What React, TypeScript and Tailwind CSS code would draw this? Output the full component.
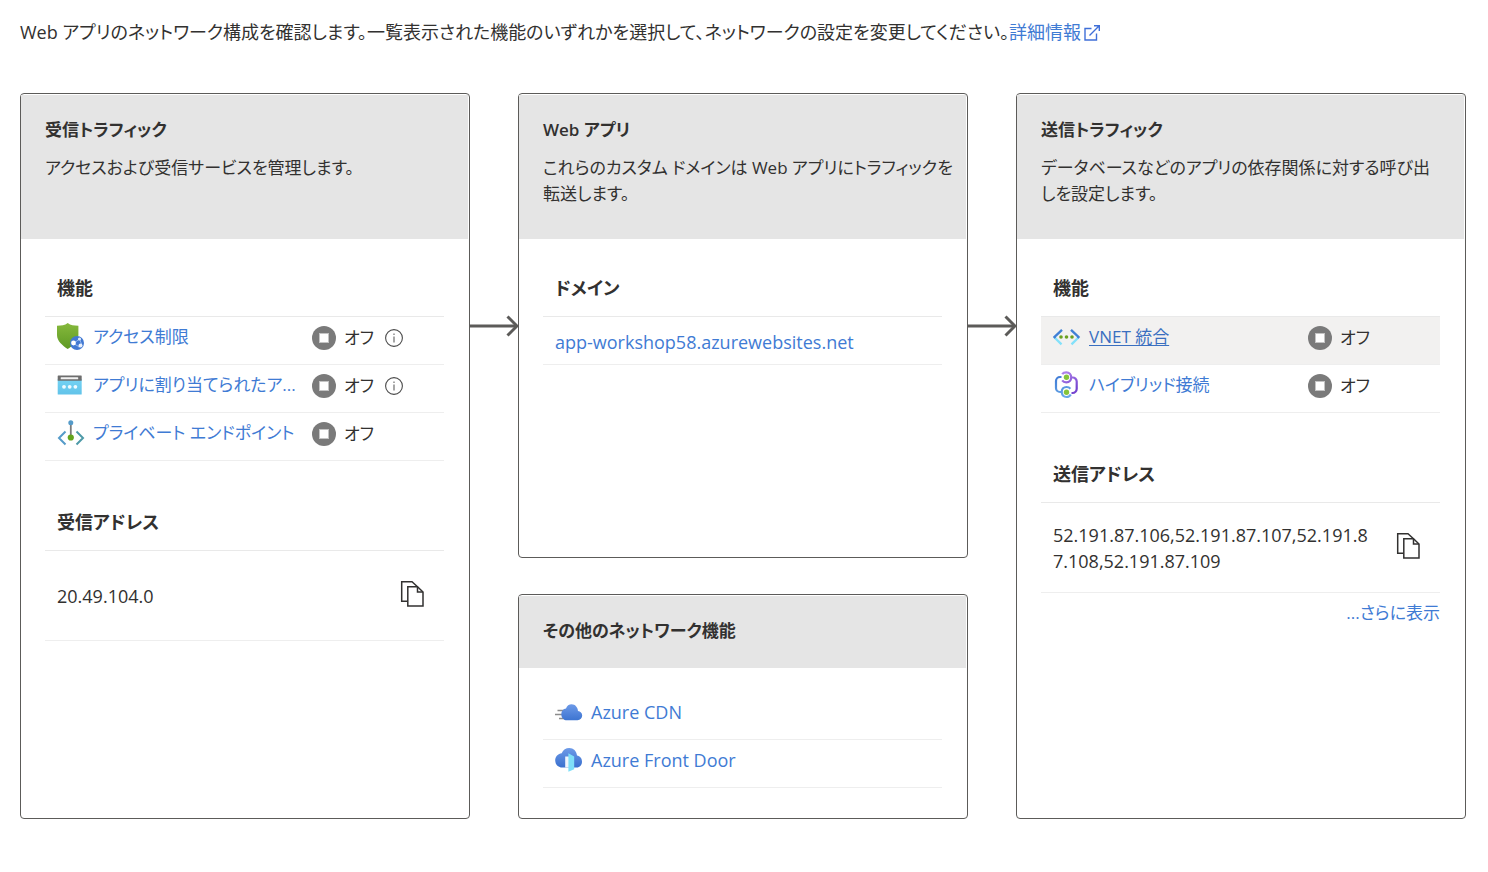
import type { ReactNode } from "react";

const LINK = "text-[#3f7bd4] hover:underline";

function ShieldIcon() {
  return (
    <svg width="28" height="28" viewBox="0 0 28 28" aria-hidden="true">
      <defs>
        <linearGradient id="shield" x1="0" y1="0" x2="0" y2="1">
          <stop offset="0" stopColor="#86b93c" />
          <stop offset="1" stopColor="#5f9a24" />
        </linearGradient>
      </defs>
      <path d="M10.700 0c3 2.400 6.200 2.600 10.700 2.700v9.300c0 6-5.500 10.500-10.700 14C5.500 22.500 0 18 0 12V2.700C4.500 2.600 7.700 2.400 10.700 0z" fill="url(#shield)" />
      <circle cx="20" cy="20" r="7" fill="#4178d2" />
      <path d="M16.500 20.500l6-4.500M16.500 20.500l6 3.500M22.500 16l2 5-2.500 3.500" stroke="#8fb4ee" strokeWidth="1" fill="none" />
      <circle cx="16.500" cy="20" r="2.400" fill="#fff" />
      <circle cx="22.500" cy="16" r="1.600" fill="#dce9fb" />
      <circle cx="23.500" cy="22.500" r="2" fill="#e8f0fc" />
    </svg>
  );
}

function WindowIcon() {
  return (
    <svg width="28" height="20" viewBox="0 0 28 20" aria-hidden="true">
      <defs>
        <linearGradient id="window" x1="0" y1="0" x2="0" y2="1">
          <stop offset="0" stopColor="#74d3f4" />
          <stop offset="1" stopColor="#62c3e9" />
        </linearGradient>
      </defs>
      <rect x="0.700" y="4" width="24" height="15.500" rx="0.600" fill="url(#window)" />
      <rect x="0.700" y="0.500" width="24" height="5.300" rx="0.600" fill="#6d6d6d" />
      <rect x="3.700" y="2.200" width="17.500" height="2" rx="0.500" fill="#f2f2f2" />
      <circle cx="7" cy="11.800" r="1.900" fill="#eefaff" />
      <circle cx="12.700" cy="11.800" r="1.900" fill="#eefaff" />
      <circle cx="18.400" cy="11.800" r="1.900" fill="#eefaff" />
    </svg>
  );
}

function EndpointIcon() {
  return (
    <svg width="28" height="26" viewBox="0 0 28 26" fill="none" aria-hidden="true">
      <path d="M8.500 11.500L2 18l6.500 6.500" stroke="#559bc9" strokeWidth="2" />
      <path d="M19.500 11.500L26 18l-6.500 6.500" stroke="#4e9aa8" strokeWidth="2" />
      <path d="M13.800 3v14" stroke="#7b7b7b" strokeWidth="1.800" />
      <circle cx="13.800" cy="2.700" r="2.500" fill="#559bc9" />
      <circle cx="13.800" cy="17.500" r="3.100" fill="#64a41c" />
    </svg>
  );
}

function VnetIcon() {
  return (
    <svg width="28" height="18" viewBox="0 0 28 18" fill="none" aria-hidden="true">
      <path d="M1.500 9.500l7 6.800" stroke="#83e1fa" strokeWidth="2.400" />
      <path d="M25.500 9.500l-7 6.800" stroke="#83e1fa" strokeWidth="2.400" />
      <path d="M9 1.800L1.500 9l1 1" stroke="#3f80d6" strokeWidth="2.400" />
      <path d="M18 1.800L25.500 9l-1 1" stroke="#3f80d6" strokeWidth="2.400" />
      <circle cx="8" cy="9" r="1.800" fill="#6aa121" />
      <circle cx="13.500" cy="9" r="1.800" fill="#6aa121" />
      <circle cx="19" cy="9" r="1.800" fill="#6aa121" />
    </svg>
  );
}

function HybridIcon() {
  return (
    <svg width="28" height="28" viewBox="0 0 28 28" fill="none" aria-hidden="true">
      <defs>
        <linearGradient id="hybridBlue" x1="0" y1="0" x2="0.400" y2="1">
          <stop offset="0" stopColor="#3f7bd6" />
          <stop offset="1" stopColor="#67a7e6" />
        </linearGradient>
        <linearGradient id="hybridPurple" x1="0" y1="0" x2="0.400" y2="1">
          <stop offset="0" stopColor="#b184ea" />
          <stop offset="1" stopColor="#7443cf" />
        </linearGradient>
      </defs>
      <path d="M8.500 6H7a4 4 0 0 0-4 4v7a4 4 0 0 0 4 4h1.700c.3 3 2 5 4.800 5 2 0 3.500-1 4.300-2.500M8.700 21c0-3 2-5 4.800-5 1.700 0 3 .6 3.900 1.700" stroke="url(#hybridBlue)" strokeWidth="2.200" />
      <path d="M18.500 22H19.500a4.200 4.200 0 0 0 4.200-4.200V10.500A4 4 0 0 0 19.500 6.500H18.500M9.200 3.200C10 2 11.500 1.300 13.300 1.300c2.900 0 4.900 2.100 4.900 5s-2 5-4.900 5c-1.800 0-3.300-.8-4.100-2" stroke="url(#hybridPurple)" strokeWidth="2.200" />
      <circle cx="13.500" cy="6.300" r="2.700" fill="#86c43a" />
      <circle cx="13.500" cy="21.200" r="2.700" fill="#86c43a" />
    </svg>
  );
}

function CdnIcon() {
  return (
    <svg width="28" height="18" viewBox="0 0 28 18" aria-hidden="true">
      <defs>
        <linearGradient id="cdn" x1="0" y1="0" x2="0" y2="1">
          <stop offset="0" stopColor="#6d9ae8" />
          <stop offset="1" stopColor="#3d74d1" />
        </linearGradient>
      </defs>
      <path d="M2.500 6.500H10M0 10.500H10M4 14.500H12" stroke="#8c8c8c" strokeWidth="1.500" />
      <path d="M23 7C22.700 3.200 20 .3 16.700.3c-2.600 0-4.900 1.500-5.700 4.200C8.300 4.900 6.300 7 6.300 10.200c0 3.500 2.500 6.100 5.600 6.100h10.600c2.700 0 4.700-2 4.700-4.700 0-2.500-1.800-4.300-4.200-4.600z" fill="url(#cdn)" />
    </svg>
  );
}

function FrontDoorIcon() {
  return (
    <svg width="28" height="26" viewBox="0 0 28 26" aria-hidden="true">
      <defs>
        <linearGradient id="door" x1="0" y1="0" x2="0" y2="1">
          <stop offset="0" stopColor="#6d9ae8" />
          <stop offset="1" stopColor="#3a70ce" />
        </linearGradient>
      </defs>
      <path d="M22 7.500C21.600 3 18.400 0 14.300 0 11 0 8 1.900 6.700 5.300 3.100 5.900.200 8.600.200 12.500c0 4 3.200 7 6.800 7h14.800c3 0 5.200-2.500 5.200-5.800 0-3.400-2.100-5.800-5-6.200z" fill="url(#door)" />
      <path d="M10.200 8.500h5V19.500h-5z" fill="#f0f4fc" />
      <path d="M13.400 5.200l5.800 3.300v12.700l-5.800 2.600z" fill="#7fdff8" />
    </svg>
  );
}

function StopIcon() {
  return (
    <svg className="shrink-0" width="24" height="24" viewBox="0 0 24 24" aria-hidden="true">
      <circle cx="12" cy="12" r="12" fill="#7a7a7a" />
      <rect x="7" y="7" width="10" height="10" fill="#c4c4c4" />
      <rect x="8" y="8" width="8" height="8" fill="#fff" />
    </svg>
  );
}

function InfoIcon() {
  return (
    <svg className="block" width="20" height="20" viewBox="0 0 20 20" fill="none" aria-hidden="true">
      <circle cx="10" cy="10" r="8.400" stroke="#4b4b4b" strokeWidth="1.100" />
      <path d="M10 8.500v6" stroke="#777" strokeWidth="1.300" />
      <path d="M10 5.500v1.500" stroke="#777" strokeWidth="1.300" />
    </svg>
  );
}

function CopyIcon() {
  return (
    <svg className="block" width="24" height="28" viewBox="0 0 24 28" fill="none" stroke="#323130" strokeWidth="1.500" aria-hidden="true">
      <path d="M7.500 21.200H1.700V1.800H12l5.500 5" />
      <path d="M7.800 6.800H17.500L23 12v14H7.800z" />
      <path d="M17.500 6.800V12H23" />
    </svg>
  );
}

function ExternalIcon() {
  return (
    <svg className="ml-0.5 inline-block" width="18" height="20" viewBox="0 0 18 20" fill="none" stroke="#3f6fd8" strokeWidth="1.400" aria-hidden="true">
      <path d="M8.500 4.500H2V16h11.500V9.500" />
      <path d="M6.500 11.500L16 2M11 1.800h5.300V7" />
    </svg>
  );
}

function Arrow() {
  return (
    <div className="pt-[222px]">
      <svg className="block w-full" height="22" viewBox="0 0 48 22" fill="none" stroke="#5c5b59" strokeWidth="3" aria-hidden="true">
        <path d="M0 11H46" />
        <path d="M37.500 1.500L47 11l-9.500 9.500" />
      </svg>
    </div>
  );
}

function Card({ title, text, children, className = "" }: { title: string; text?: string; children: ReactNode; className?: string }) {
  return (
    <section className={`rounded-sm border border-[#5c5b59] pt-px pr-px ${className}`}>
      <header className={`bg-[#e5e5e5] pt-[21px] pr-3 pl-6 text-[17px] ${text ? "min-h-36" : "min-h-[72px]"}`}>
        <h2 className="leading-[28px] font-semibold">{title}</h2>
        {text && <p className="mt-[11px] leading-[26px] whitespace-pre-line">{text}</p>}
      </header>
      {children}
    </section>
  );
}

type Feature = { name: string; icon: ReactNode; info?: boolean; active?: boolean };

function FeatureTable({ features }: { features: Feature[] }) {
  return (
    <table className="w-full table-fixed border-separate border-spacing-0 text-left">
      <colgroup>
        <col className="w-2/3" />
        <col className="w-1/3" />
      </colgroup>
      <thead>
        <tr>
          <th scope="col" colSpan={2} className="h-12 border-b border-[#e9e9e9] px-3 pt-0 pb-2 font-semibold">機能</th>
        </tr>
      </thead>
      <tbody className="text-[17px]">
        {features.map((f) => (
          <tr key={f.name} className={f.active ? "bg-[#f2f1f0]" : ""}>
            <td className="h-12 border-b border-[#eeeeee] pt-0 pb-2 pl-3">
              <a href="#" className={`flex items-center gap-2 whitespace-nowrap ${f.active ? "text-[#3a6fc0] underline decoration-1 underline-offset-2" : LINK}`}>
                <span className="flex w-7 shrink-0">{f.icon}</span>
                {f.name}
              </a>
            </td>
            <td className="h-12 border-b border-[#eeeeee] pt-0 pb-1.5 pl-px">
              <span className="flex items-center gap-2 whitespace-nowrap">
                <StopIcon />
                オフ
                {f.info && (
                  <button type="button" aria-label="情報" className="ml-0.5">
                    <InfoIcon />
                  </button>
                )}
              </span>
            </td>
          </tr>
        ))}
      </tbody>
    </table>
  );
}

function SubHeading({ children }: { children: ReactNode }) {
  return <h3 className="flex h-12 items-center border-b border-[#e9e9e9] px-3 pb-2 font-semibold">{children}</h3>;
}

function Address({ children }: { children: ReactNode }) {
  return (
    <div className="flex h-[90px] items-center justify-between border-b border-[#eeeeee] pr-5 pl-3 leading-[26px]">
      <span className="w-80 break-all">{children}</span>
      <button type="button" aria-label="コピー" className="pb-1">
        <CopyIcon />
      </button>
    </div>
  );
}

const inbound: Feature[] = [
  { name: "アクセス制限", icon: <ShieldIcon />, info: true },
  { name: "アプリに割り当てられたア...", icon: <WindowIcon />, info: true },
  { name: "プライベート エンドポイント", icon: <EndpointIcon /> },
];

const outbound: Feature[] = [
  { name: "VNET 統合", icon: <VnetIcon />, active: true },
  { name: "ハイブリッド接続", icon: <HybridIcon /> },
];

const others = [
  { name: "Azure CDN", icon: <CdnIcon /> },
  { name: "Azure Front Door", icon: <FrontDoorIcon /> },
];

export default function App() {
  return (
    <main lang="ja" className="bg-white pt-[18px] pr-[22px] pb-[53px] pl-5 font-['Open_Sans','Noto_Sans_CJK_JP',sans-serif] text-[18px] text-[#323130] [font-feature-settings:'palt']">
      <p className="leading-[28px]">
        Web アプリのネットワーク構成を確認します。一覧表示された機能のいずれかを選択して、ネットワークの設定を変更してください。
        <a href="#" className={LINK}>
          詳細情報
          <ExternalIcon />
        </a>
      </p>
      <div className="mt-[47px] grid grid-cols-[1fr_48px_1fr_48px_1fr]">
        <Card title="受信トラフィック" text="アクセスおよび受信サービスを管理します。">
          <div className="px-6 pt-[30px]">
            <FeatureTable features={inbound} />
            <div className="mt-[42px]">
              <SubHeading>受信アドレス</SubHeading>
              <Address>20.49.104.0</Address>
            </div>
          </div>
        </Card>
        <Arrow />
        <div className="flex flex-col gap-9">
          <Card className="min-h-[465px]" title="Web アプリ" text={"これらのカスタム ドメインは Web アプリにトラフィックを\n転送します。"}>
            <div className="px-6 pt-[30px]">
              <SubHeading>ドメイン</SubHeading>
              <div className="flex h-12 items-center border-b border-[#eeeeee] px-3">
                <a href="#" className={`pt-1 ${LINK}`}>app-workshop58.azurewebsites.net</a>
              </div>
            </div>
          </Card>
          <Card title="その他のネットワーク機能">
            <ul className="px-6 pt-6 pb-[30px]">
              {others.map((o) => (
                <li key={o.name} className="flex h-12 items-center border-b border-[#eeeeee] px-3 pb-1.5">
                  <a href="#" className={`flex items-center gap-2 ${LINK}`}>
                    {o.icon}
                    {o.name}
                  </a>
                </li>
              ))}
            </ul>
          </Card>
        </div>
        <Arrow />
        <Card title="送信トラフィック" text={"データベースなどのアプリの依存関係に対する呼び出\nしを設定します。"}>
          <div className="px-6 pt-[30px]">
            <FeatureTable features={outbound} />
            <div className="mt-[42px]">
              <SubHeading>送信アドレス</SubHeading>
              <Address>52.191.87.106,52.191.87.107,52.191.87.108,52.191.87.109</Address>
              <p className="mt-1 text-right text-[17px] leading-[32px]">
                <a href="#" className={LINK}>...さらに表示</a>
              </p>
            </div>
          </div>
        </Card>
      </div>
    </main>
  );
}
